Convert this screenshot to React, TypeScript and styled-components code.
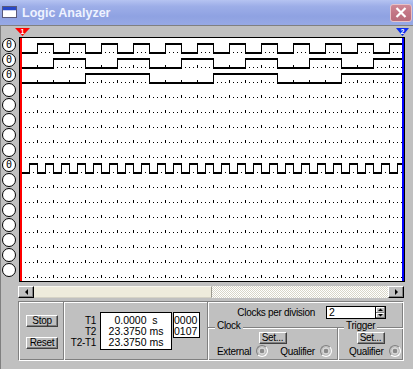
import React from "react";
import styled, { createGlobalStyle } from "styled-components";

const GlobalStyle = createGlobalStyle`
  html, body { margin: 0; padding: 0; }
  body {
    background: #c0c0c0;
    font-family: "Liberation Sans", Arial, sans-serif;
    font-size: 10px;
    color: #000;
  }
  *, *::before, *::after { box-sizing: border-box; }
`;

/* ---------- window chrome ---------- */

const Window = styled.div`
  width: 413px;
  height: 369px;
  overflow: hidden;
  display: flex;
  flex-direction: column;
  background: #c0c0c0;
`;

const TitleBar = styled.div`
  flex: none;
  height: 25px;
  display: flex;
  align-items: center;
  padding: 0 1px 0 2px;
  background: linear-gradient(180deg, #b5c3f1 0%, #9daee8 25%, #8fa2e2 65%, #97a9e5 100%);
`;

const IconSvg = styled.svg`
  flex: none;
  display: block;
  margin-bottom: 2px;
`;

const TitleText = styled.span`
  margin-left: 5px;
  font: bold 12.5px "Liberation Sans", Arial, sans-serif;
  color: #eef2ff;
  white-space: nowrap;
`;

const CloseButton = styled.div`
  margin-left: auto;
  width: 22px;
  height: 18px;
  border-radius: 3px;
  border: 1px solid #e6c2c9;
  background: linear-gradient(180deg, #cf8896 0%, #c27584 50%, #b86c7b 100%);
  display: flex;
  align-items: center;
  justify-content: center;
`;

const Client = styled.div`
  flex: 1;
  display: flex;
  flex-direction: column;
  border-top: 1px solid #808080;
  border-left: 1px solid #808080;
`;

/* ---------- scope ---------- */

const ScopeArea = styled.div`
  display: grid;
  grid-template-columns: 18px 386px;
  grid-template-rows: 11px 245px;
`;

const MarkerSvg = styled.svg`
  grid-column: 1 / -1;
  grid-row: 1;
  display: block;
  overflow: visible;
`;

const ProbeColumn = styled.div`
  grid-column: 1;
  grid-row: 2;
  display: flex;
  flex-direction: column;
  gap: 1px;
  padding: 1px 0 0 1px;
`;

const Probe = styled.div`
  width: 14px;
  height: 14px;
  border-radius: 50%;
  border: 1px solid #000;
  background: #fff;
  display: flex;
  align-items: center;
  justify-content: center;
  font: 10px "DejaVu Sans Mono", monospace;
  line-height: 1;
`;

const WavePanel = styled.div`
  grid-column: 2;
  grid-row: 2;
  border: 1px solid #000;
  background: #fff;
`;

const WaveSvg = styled.svg`
  display: block;
  shape-rendering: crispEdges;
`;

/* ---------- scrollbar ---------- */

const ScrollBar = styled.div`
  display: flex;
  width: 386px;
  height: 12px;
  margin: 4px 0 0 17px;
`;

const ScrollArrow = styled.div`
  flex: none;
  width: 16px;
  background: #c0c0c0;
  border: 1px solid;
  border-color: #fff #000 #000 #fff;
  box-shadow: inset -1px -1px #808080;
  display: flex;
  align-items: center;
  justify-content: center;
`;

const ScrollThumb = styled.div<{ $w: number }>`
  flex: none;
  width: ${(p) => p.$w}px;
  background: #eeebdc;
  border-right: 1px solid #9c9a90;
  border-top: 1px solid #f8f7f0;
  border-bottom: 1px solid #d6d3c6;
`;

const ScrollTrack = styled.div`
  flex: 1;
  background: repeating-conic-gradient(#ffffff 0 25%, #d9d6c8 0 50%) 0 0 / 2px 2px;
`;

/* ---------- control panel ---------- */

const Panel = styled.div`
  width: 386px;
  height: 60px;
  margin: 3px 0 0 17px;
  border: 1px solid;
  border-color: #808080 #fff #fff #808080;
  box-shadow: inset 1px 1px #fff, inset -1px -1px #808080;
  display: grid;
  grid-template-columns: 44px 144px 196px;
  letter-spacing: -0.3px;
`;

const ButtonSection = styled.div`
  display: flex;
  flex-direction: column;
  align-items: center;
  gap: 10px;
  padding: 13px 0 0 2px;
`;

const WinButton = styled.div<{ $w: number }>`
  width: ${(p) => p.$w}px;
  height: 12px;
  background: #c0c0c0;
  border: 1px solid;
  border-color: #fff #404040 #404040 #fff;
  box-shadow: inset -1px -1px #808080;
  display: flex;
  align-items: center;
  justify-content: center;
  font-size: 10px;
  line-height: 10px;
  flex: none;
`;

const Divided = styled.div`
  border-left: 1px solid #808080;
  box-shadow: inset 1px 0 #fff;
`;

const TimeSection = styled(Divided)`
  display: flex;
  align-items: flex-start;
  padding-top: 10px;
`;

const TimeLabels = styled.div`
  width: 32px;
  padding-top: 3px;
  text-align: right;
  line-height: 11px;
`;

const ValueBox = styled.div<{ $w: number; $center?: boolean }>`
  width: ${(p) => p.$w}px;
  margin-left: ${(p) => (p.$center ? 4 : 1)}px;
  background: #fff;
  border: 1px solid #000;
  padding: 2px 0 ${(p) => (p.$center ? 1 : 0)}px ${(p) => (p.$center ? 0 : 0)}px;
  line-height: 11px;
  font-size: 10.5px;
  letter-spacing: 0;
  text-align: ${(p) => (p.$center ? "center" : "left")};
  white-space: pre;
`;

const ClockSection = styled(Divided)`
  display: flex;
  flex-direction: column;
`;

const ClocksRow = styled.div`
  display: flex;
  justify-content: flex-end;
  align-items: center;
  gap: 11px;
  padding: 4px 17px 0 0;
  line-height: 11px;
`;

const SpinBox = styled.div`
  display: flex;
  height: 13px;
  border: 1px solid #000;
`;

const SpinField = styled.div`
  width: 48px;
  background: #fff;
  padding-left: 2px;
  line-height: 11px;
  font-size: 10.5px;
`;

const SpinButtons = styled.div`
  width: 10px;
  display: flex;
  flex-direction: column;
  border-left: 1px solid #000;
`;

const SpinBtn = styled.div`
  flex: 1;
  background: #c0c0c0;
  box-shadow: inset -1px -1px #808080, inset 1px 1px #fff;
  display: flex;
  align-items: center;
  justify-content: center;
`;

const GroupRow = styled.div`
  flex: 1;
  margin-top: 8px;
  display: grid;
  grid-template-columns: 129px 1fr;
  border-top: 1px solid #808080;
  box-shadow: inset 0 1px #fff;
`;

const Group = styled.div<{ $divider?: boolean; $legendLeft: number }>`
  display: flex;
  flex-direction: column;
  align-items: center;
  ${(p) =>
    p.$divider
      ? "border-left: 1px solid #808080; box-shadow: inset 1px 0 #fff;"
      : ""}
  & > span:first-child {
    margin-left: ${(p) => p.$legendLeft}px;
  }
`;

const Legend = styled.span`
  align-self: flex-start;
  margin-top: -8px;
  padding: 0 2px;
  line-height: 11px;
  background: #c0c0c0;
`;

const RadioRow = styled.div<{ $pad: number }>`
  align-self: stretch;
  display: flex;
  align-items: center;
  height: 12px;
  margin-top: 1px;
  padding-left: ${(p) => p.$pad}px;
  line-height: 11px;
  white-space: nowrap;
`;

const RadioLabel = styled.span<{ $gap: number }>`
  margin-right: ${(p) => p.$gap}px;
`;

const Radio = styled.span<{ $gap?: number }>`
  flex: none;
  width: 12px;
  height: 12px;
  border-radius: 50%;
  margin-right: ${(p) => p.$gap ?? 0}px;
  border: 1px solid;
  border-color: #808080 #ffffff #ffffff #808080;
  background: radial-gradient(circle, #8a8a8a 0 2px, #d8d8d8 2.6px 3.4px, #c0c0c0 3.8px);
`;

/* ---------- waveform data ---------- */

const W = 384;
const H = 243;
const X0 = 2;
const X1 = 382;
const ROWS = 16;
const base = (i: number) => 14 + 15 * i;
const rect = (x: number, y: number, w: number, h: number) =>
  `M${x} ${y}h${w}v${h}h${-w}z`;

function gridPath(): string {
  let d = "";
  for (let i = 0; i < ROWS; i++) {
    const b = base(i);
    for (let k = 0; 1 + 4 * k < X1; k++) {
      const x = 1 + 4 * k;
      d += k % 4 === 0 ? rect(x, b - 2, 1, 3) : rect(x, b, 1, 1);
    }
  }
  return d;
}

function signalPath(row: number, first: number, half: number): string {
  const b = base(row);
  let d = "";
  let x = X0;
  let high = false;
  let edge = first;
  while (x < X1) {
    const inside = edge < X1;
    const end = Math.min(edge, X1);
    const w = inside ? end - x + 1 : end - x;
    d += rect(x, high ? b - 9 : b, w, 2);
    if (inside) d += rect(edge, b - 9, 1, 11);
    x = edge;
    high = !high;
    edge += half;
  }
  return d;
}

const SIGNALS = [
  { row: 0, first: 17, half: 16 },
  { row: 1, first: 33, half: 32 },
  { row: 2, first: 65, half: 64 },
  { row: 8, first: 9, half: 8 },
];

const LABELED = new Set([0, 1, 2, 8]);

const Waveforms: React.FC = () => {
  const grid = gridPath();
  const sig = SIGNALS.map((s) => signalPath(s.row, s.first, s.half)).join("");
  return (
    <WaveSvg width={W} height={H} viewBox={`0 0 ${W} ${H}`}>
      <path d={grid} fill="#000" />
      <path d={sig} fill="#000" />
      <rect x={0} y={0} width={2} height={H} fill="#ff0000" />
      <rect x={382} y={0} width={2} height={H} fill="#0000ff" />
    </WaveSvg>
  );
};

const Markers: React.FC = () => (
  <MarkerSvg width={412} height={11} viewBox="1 26 412 11">
    <polygon points="15,28 30,28 22.5,36" fill="#ff0000" />
    <text
      x={22.5}
      y={33.6}
      fontSize={7}
      fontWeight="bold"
      fill="#fff"
      textAnchor="middle"
      fontFamily="Liberation Sans, Arial, sans-serif"
    >
      1
    </text>
    <polygon points="396,28 409,28 402.5,36" fill="#0a2cf0" />
    <text
      x={402.5}
      y={33.6}
      fontSize={7}
      fontWeight="bold"
      fill="#fff"
      textAnchor="middle"
      fontFamily="Liberation Sans, Arial, sans-serif"
    >
      2
    </text>
  </MarkerSvg>
);

const AppIcon: React.FC = () => (
  <IconSvg width={15} height={12} viewBox="0 0 15 12" shapeRendering="crispEdges">
    <rect x={0.5} y={0.5} width={14} height={11} fill="#ffffff" stroke="#5a5a7a" />
    <rect x={1} y={1} width={13} height={3} fill="#2848c8" />
    <rect x={1} y={4} width={13} height={1} fill="#c8d0f0" />
  </IconSvg>
);

const Arrow: React.FC<{ dir: "left" | "right" | "up" | "down" }> = ({ dir }) => {
  const pts =
    dir === "left"
      ? "4,0 4,6 1,3"
      : dir === "right"
      ? "1,0 1,6 4,3"
      : dir === "up"
      ? "0,3 5,3 2.5,0.5"
      : "0,0 5,0 2.5,2.5";
  const [w, h] = dir === "left" || dir === "right" ? [5, 6] : [5, 3];
  return (
    <svg width={w} height={h} viewBox={`0 0 ${w} ${h}`} style={{ display: "block" }}>
      <polygon points={pts} fill="#000" />
    </svg>
  );
};

export default function App() {
  return (
    <>
      <GlobalStyle />
      <Window>
        <TitleBar>
          <AppIcon />
          <TitleText>Logic Analyzer</TitleText>
          <CloseButton>
            <svg width={12} height={11} viewBox="0 0 12 11">
              <path d="M1.5 1 L10.5 10 M10.5 1 L1.5 10" stroke="#fff" strokeWidth={2.2} />
            </svg>
          </CloseButton>
        </TitleBar>
        <Client>
          <ScopeArea>
            <Markers />
            <ProbeColumn>
              {Array.from({ length: ROWS }, (_, i) => (
                <Probe key={i}>{LABELED.has(i) ? "0" : ""}</Probe>
              ))}
            </ProbeColumn>
            <WavePanel>
              <Waveforms />
            </WavePanel>
          </ScopeArea>

          <ScrollBar>
            <ScrollArrow>
              <Arrow dir="left" />
            </ScrollArrow>
            <ScrollThumb $w={178} />
            <ScrollTrack />
            <ScrollArrow>
              <Arrow dir="right" />
            </ScrollArrow>
          </ScrollBar>

          <Panel>
            <ButtonSection>
              <WinButton $w={32}>Stop</WinButton>
              <WinButton $w={32}>Reset</WinButton>
            </ButtonSection>

            <TimeSection>
              <TimeLabels>
                <div>T1</div>
                <div>T2</div>
                <div>T2-T1</div>
              </TimeLabels>
              <ValueBox $w={72} $center>
                <div>{"0.0000  s"}</div>
                <div>23.3750 ms</div>
                <div>23.3750 ms</div>
              </ValueBox>
              <ValueBox $w={27}>
                <div>0000</div>
                <div>0107</div>
              </ValueBox>
            </TimeSection>

            <ClockSection>
              <ClocksRow>
                <span>Clocks per division</span>
                <SpinBox>
                  <SpinField>2</SpinField>
                  <SpinButtons>
                    <SpinBtn>
                      <Arrow dir="up" />
                    </SpinBtn>
                    <SpinBtn>
                      <Arrow dir="down" />
                    </SpinBtn>
                  </SpinButtons>
                </SpinBox>
              </ClocksRow>
              <GroupRow>
                <Group $legendLeft={7}>
                  <Legend>Clock</Legend>
                  <WinButton $w={28} style={{ marginTop: 1 }}>
                    Set...
                  </WinButton>
                  <RadioRow $pad={9}>
                    <RadioLabel $gap={5}>External</RadioLabel>
                    <Radio $gap={12} />
                    <RadioLabel $gap={5}>Qualifier</RadioLabel>
                    <Radio />
                  </RadioRow>
                </Group>
                <Group $divider $legendLeft={6}>
                  <Legend>Trigger</Legend>
                  <WinButton $w={28} style={{ marginTop: 1 }}>
                    Set...
                  </WinButton>
                  <RadioRow $pad={11}>
                    <RadioLabel $gap={5}>Qualifier</RadioLabel>
                    <Radio />
                  </RadioRow>
                </Group>
              </GroupRow>
            </ClockSection>
          </Panel>
        </Client>
      </Window>
    </>
  );
}
